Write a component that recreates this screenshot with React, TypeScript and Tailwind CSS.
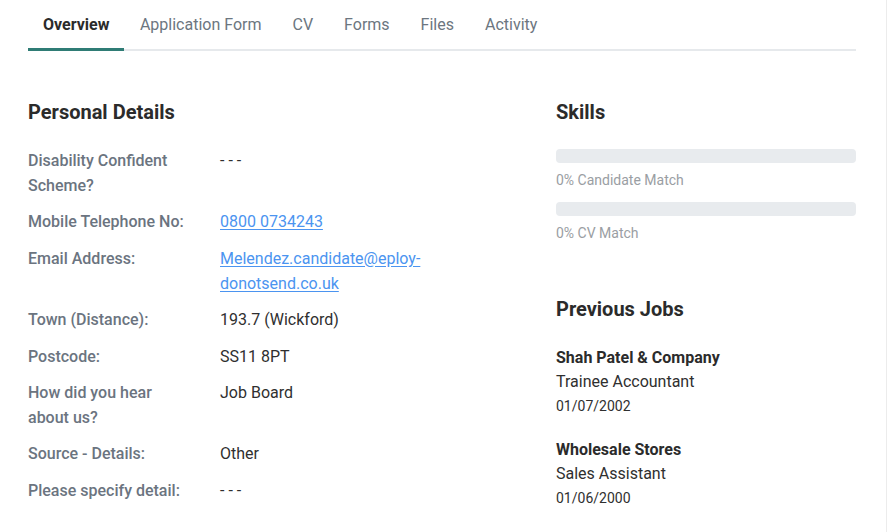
import { ReactNode } from "react";

const tabs = ["Overview", "Application Form", "CV", "Forms", "Files", "Activity"];

type Detail = { label: ReactNode; value: ReactNode };

const details: Detail[] = [
  { label: <>Disability Confident<br />Scheme?</>, value: "- - -" },
  {
    label: "Mobile Telephone No:",
    value: (
      <a href="#" className="text-[#4b94f0] underline underline-offset-2">
        0800 0734243
      </a>
    ),
  },
  {
    label: "Email Address:",
    value: (
      <a href="#" className="text-[#4b94f0] underline underline-offset-2">
        Melendez.candidate@eploy-<br />donotsend.co.uk
      </a>
    ),
  },
  { label: "Town (Distance):", value: "193.7 (Wickford)" },
  { label: "Postcode:", value: "SS11 8PT" },
  { label: <>How did you hear<br />about us?</>, value: "Job Board" },
  { label: "Source - Details:", value: "Other" },
  { label: "Please specify detail:", value: "- - -" },
];

const jobs = [
  { company: "Shah Patel & Company", title: "Trainee Accountant", date: "01/07/2002" },
  { company: "Wholesale Stores", title: "Sales Assistant", date: "01/06/2000" },
];

const matches = ["0% Candidate Match", "0% CV Match"];

export default function App() {
  return (
    <div
      className="min-h-screen bg-white border-r border-[#ececec] text-[#333333]"
      style={{ fontFamily: "Roboto, 'Liberation Sans', sans-serif" }}
    >
      <div className="pl-7 pr-[30px]">
        {/* Tabs */}
        <div className="flex border-b-2 border-[#e6e9ec] pt-[13px]">
          {tabs.map((tab, i) => (
            <button
              key={tab}
              className={`pb-[11px] text-base leading-[24px] -mb-[2px] border-b-[3px] ${
                i === 0
                  ? "font-bold text-[#2b2b2b] border-[#2f7c75] px-[15px]"
                  : "text-[#6c7680] border-transparent px-[15.5px]"
              }`}
            >
              {tab}
            </button>
          ))}
        </div>

        <div className="flex pt-[47px]">
          {/* Personal Details */}
          <div className="flex-1">
            <h2 className="text-[20px] leading-[28px] font-bold text-[#2b2b2b] mb-[22px]">
              Personal Details
            </h2>
            <div className="flex flex-col gap-y-[11.4px]">
              {details.map((d, i) => (
                <div key={i} className="flex text-base leading-[25px]">
                  <div className="w-[192px] font-medium text-[#6b7480]">{d.label}</div>
                  <div className="text-[#2f2f2f]">{d.value}</div>
                </div>
              ))}
            </div>
          </div>

          {/* Skills and previous jobs */}
          <div className="w-[300px]">
            <h2 className="text-[20px] leading-[28px] font-bold text-[#2b2b2b] mb-[23px]">
              Skills
            </h2>
            <div className="flex flex-col gap-[12px]">
              {matches.map((m) => (
                <div key={m}>
                  <div className="h-[14px] rounded bg-[#e8ebee]" />
                  <div className="text-sm leading-[20px] mt-[7px] text-[#9a9ea3]">{m}</div>
                </div>
              ))}
            </div>

            <h2 className="text-[20px] leading-[28px] font-bold text-[#2b2b2b] mt-[52px] mb-[23px]">
              Previous Jobs
            </h2>
            <div className="flex flex-col gap-[20px]">
              {jobs.map((j) => (
                <div key={j.company}>
                  <div className="text-base leading-[24px] font-bold text-[#2b2b2b]">{j.company}</div>
                  <div className="text-base leading-[24px] text-[#2f2f2f]">{j.title}</div>
                  <div className="text-sm leading-[24px] text-[#2f2f2f]">{j.date}</div>
                </div>
              ))}
            </div>
          </div>
        </div>
      </div>
    </div>
  );
}
